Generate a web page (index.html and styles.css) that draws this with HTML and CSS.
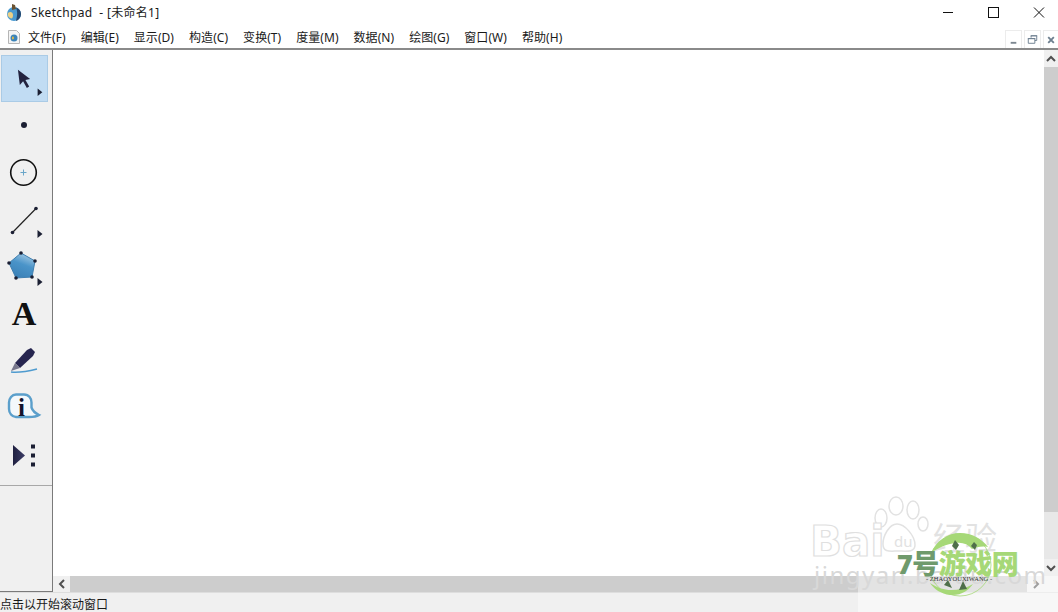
FILE: index.html
```html
<!DOCTYPE html>
<html>
<head>
    <meta charset="UTF-8">
    <title>Sketchpad</title>
    <link rel="stylesheet" href="styles.css">
</head>
<body>
    <div class="window">
        <div class="titlebar">
            <svg class="app-icon" width="16" height="18" viewBox="0 0 16 18">
                <circle cx="8" cy="10" r="7" fill="#4a9ad0"/>
                <path d="M10 3.500c3 1 5 3.500 5 6.500s-2 6-5 7c1-4 2-9 0-13.500z" fill="#23456c"/>
                <path d="M2 9c2-2 5-1 5 2s-1 4-3 3-3-4-2-5z" fill="#ecd186"/>
                <path d="M6 0l3 1 1 4-4 1z" fill="#6a5230"/>
            </svg>
            <span class="title-text">Sketchpad&nbsp;&nbsp;- [未命名1]</span>
            <div class="win-buttons">
                <svg class="win-btn" width="46" height="26" viewBox="0 0 46 26"><path d="M19 12.500h10" stroke="#111" fill="none"/></svg>
                <svg class="win-btn" width="46" height="26" viewBox="0 0 46 26"><rect x="18.500" y="7.500" width="10" height="10" stroke="#111" fill="none"/></svg>
                <svg class="win-btn" width="46" height="26" viewBox="0 0 46 26"><path d="M18 7.500l10 10M28 7.500l-10 10" stroke="#111" fill="none"/></svg>
            </div>
        </div>

        <div class="menubar">
            <svg class="doc-icon" width="14" height="16" viewBox="0 0 14 16">
                <path d="M1.500 1.500h8l3 3v10h-11z" fill="#f4f4f4" stroke="#b5b5b5"/>
                <circle cx="7" cy="9" r="3.500" fill="#3b83b8"/>
                <path d="M5 8c1-1 2 0 2 1s-1 2-2 1z" fill="#d9b54a"/>
            </svg>
            <span class="menu-item">文件(F)</span>
            <span class="menu-item">编辑(E)</span>
            <span class="menu-item">显示(D)</span>
            <span class="menu-item">构造(C)</span>
            <span class="menu-item">变换(T)</span>
            <span class="menu-item">度量(M)</span>
            <span class="menu-item">数据(N)</span>
            <span class="menu-item">绘图(G)</span>
            <span class="menu-item">窗口(W)</span>
            <span class="menu-item">帮助(H)</span>
            <div class="doc-buttons">
                <div class="doc-btn"><svg width="16" height="16" viewBox="0 0 16 16"><path d="M5 11h6" stroke="#7d8790" stroke-width="2"/></svg></div>
                <div class="doc-btn"><svg width="16" height="16" viewBox="0 0 16 16"><path d="M6.500 5.500v-2h6v5h-2M3.500 6.500h7v5h-7z" stroke="#6d7f8f" fill="none"/><path d="M6 3.500h7M3 6.500h8" stroke="#6d7f8f"/></svg></div>
                <div class="doc-btn"><svg width="16" height="16" viewBox="0 0 16 16"><path d="M4.500 5l6 6M10.500 5l-6 6" stroke="#6d7f8f" stroke-width="2"/></svg></div>
            </div>
        </div>

        <div class="workspace">
            <div class="toolbox">
                <div class="tools">
                    <div class="tool active">
                        <svg width="48" height="46" viewBox="0 0 48 46">
                            <path d="M17 13l13 10-5 1 4 7-2.500 1.500-4-7-3.500 4z" fill="#23233f"/>
                            <path class="more" d="M38 33l5 4-5 4z"/>
                        </svg>
                    </div>
                    <div class="tool">
                        <svg width="48" height="46" viewBox="0 0 48 46"><circle cx="24" cy="22" r="3" fill="#1b1f33"/></svg>
                    </div>
                    <div class="tool">
                        <svg width="48" height="46" viewBox="0 0 48 46">
                            <circle cx="23.500" cy="22.500" r="12.800" fill="none" stroke="#111" stroke-width="1.600"/>
                            <path d="M20.500 22.500h6M23.500 19.500v6" stroke="#6aa6c9"/>
                        </svg>
                    </div>
                    <div class="tool">
                        <svg width="48" height="46" viewBox="0 0 48 46">
                            <path d="M12.500 34.500l23.500-24" stroke="#222" stroke-width="1.200"/>
                            <circle cx="12.500" cy="34.500" r="1.800" fill="#1b1f33"/>
                            <circle cx="36" cy="10.500" r="1.800" fill="#1b1f33"/>
                            <path class="more" d="M37.500 32l5 4-5 4z"/>
                        </svg>
                    </div>
                    <div class="tool">
                        <svg width="48" height="46" viewBox="0 0 48 46">
                            <defs>
                                <linearGradient id="poly" x1="0.700" y1="0" x2="0.300" y2="1">
                                    <stop offset="0" stop-color="#a9cde6"/>
                                    <stop offset="0.450" stop-color="#4a94c9"/>
                                    <stop offset="1" stop-color="#3a80b6"/>
                                </linearGradient>
                            </defs>
                            <path d="M21 8l14 8-3 16-16 1-7-15z" fill="url(#poly)" stroke="#3f7fb0"/>
                            <g fill="#1b1f33">
                                <circle cx="21" cy="8" r="1.800"/><circle cx="35" cy="16" r="1.800"/><circle cx="32" cy="32" r="1.800"/><circle cx="16" cy="33" r="1.800"/><circle cx="9" cy="18" r="1.800"/>
                            </g>
                            <path class="more" d="M37.500 33l5 4-5 4z"/>
                        </svg>
                    </div>
                    <div class="tool tool-text">A</div>
                    <div class="tool">
                        <svg width="48" height="46" viewBox="0 0 48 46">
                            <path d="M31 9l4 4-2 4-13 12-5-5 12-13z" fill="#26254f"/>
                            <path d="M15 24l5 5-9 3z" fill="#77778c"/>
                            <path d="M11 33c9 1 18-1 26-3" stroke="#4f9bcf" stroke-width="1.600" fill="none"/>
                        </svg>
                    </div>
                    <div class="tool">
                        <svg width="48" height="46" viewBox="0 0 48 46">
                            <path d="M16 7.500h8c5 0 7.500 4 7.500 8v5c1 3 4.500 6 7.500 7.500-3 2-7 2-10 2H16c-4 0-7-4-7-8v-6.500c0-4 3-8 7-8z" fill="#f4f8fb" stroke="#5b9fcb" stroke-width="2.400"/>
                            <text class="info-i" x="21.500" y="28.500" text-anchor="middle">i</text>
                        </svg>
                    </div>
                    <div class="tool">
                        <svg width="48" height="46" viewBox="0 0 48 46">
                            <defs>
                                <linearGradient id="play" x1="0" y1="0" x2="1" y2="0">
                                    <stop offset="0" stop-color="#1f2040"/>
                                    <stop offset="1" stop-color="#3c3c66"/>
                                </linearGradient>
                            </defs>
                            <path d="M13 11l12 10.500-12 10.500z" fill="url(#play)"/>
                            <path d="M31 10.500h4v4h-4zM31 19.500h4v4h-4zM31 28.500h4v4h-4z" fill="#1b1f33"/>
                        </svg>
                    </div>
                </div>
            </div>

            <div class="canvas-area">
                <div class="canvas-row">
                    <div class="canvas"></div>
                    <div class="vscroll">
                        <div class="arrow"><svg width="14" height="16" viewBox="0 0 14 16"><path d="M3 10l4-4 4 4" stroke="#505050" stroke-width="2" fill="none"/></svg></div>
                        <div class="vtrack"><div class="vthumb"></div></div>
                        <div class="arrow"><svg width="14" height="16" viewBox="0 0 14 16"><path d="M3 6l4 4 4-4" stroke="#505050" stroke-width="2" fill="none"/></svg></div>
                    </div>
                </div>
                <div class="hscroll">
                    <div class="arrow-h"><svg width="16" height="16" viewBox="0 0 16 16"><path d="M10 4l-4 4 4 4" stroke="#505050" stroke-width="2" fill="none"/></svg></div>
                    <div class="hthumb"></div>
                    <div class="arrow-h"><svg width="16" height="16" viewBox="0 0 16 16"><path d="M6 4l4 4-4 4" stroke="#505050" stroke-width="2" fill="none"/></svg></div>
                    <div class="corner"></div>
                </div>
            </div>
        </div>

        <div class="statusbar">点击以开始滚动窗口</div>

        <!-- watermarks over the corner -->
        <div class="mark-fade"></div>
        <div class="mark-baidu">
            <svg class="paw" width="62" height="62" viewBox="0 0 62 62" fill="none" stroke="#e2e2e2" stroke-width="1.500">
                <ellipse cx="10" cy="22" rx="6" ry="9"/>
                <ellipse cx="25" cy="10" rx="7" ry="9"/>
                <ellipse cx="42" cy="14" rx="6" ry="9"/>
                <ellipse cx="52" cy="28" rx="5" ry="7"/>
                <path d="M26 28c8 0 18 12 18 21 0 8-10 6-17 6s-15 2-15-7c0-8 6-20 14-20z"/>
            </svg>
            <span class="baidu-du">du</span>
            <span class="baidu-word">Bai</span>
            <span class="baidu-cn">经验</span>
            <span class="baidu-url">jingyan.baidu.com</span>
        </div>
        <div class="mark-seven">
            <svg class="seven-ring" width="62" height="68" viewBox="0 0 62 68">
                <circle cx="30" cy="34" r="31" fill="none" stroke="#a6d877" stroke-width="0.800"/>
                <path d="M1 22C7 9 18 2 30 2c12 0 22 6 28 14-6-1-12 0-16 2-4-5-10-7-16-6C16 13 8 17 1 22z" fill="#a6d877"/>
                <path d="M0 52c8 5 14 7 21 7 8 0 15-2 22-6-4 6-12 12-23 11C11 63 4 58 0 52z" fill="#a6d877"/>
                <path d="M25 9l4 5-3 5-4-4zM44 11l3 3-2 5-4-4z" fill="#4f6f4a"/>
                <path d="M14 54l4-5 4 8zM29 59l4-9 4 8z" fill="#4f6f4a"/>
            </svg>
            <div class="seven-text"><span class="seven-dark">7号</span><span class="seven-light">游戏网</span></div>
            <div class="seven-sub">- ZHAOYOUXIWANG -</div>
        </div>
    </div>
</body>
</html>
```

FILE: styles.css
```css
* {
    box-sizing: border-box;
}

body {
    margin: 0;
    background-color: #fff;
    font-family: "Noto Sans", "Noto Sans CJK SC", sans-serif;
    font-size: 12px;
    color: #1a1a1a;
}

.window {
    position: relative;
    width: 1058px;
    height: 612px;
    display: flex;
    flex-direction: column;
    overflow: hidden;
}

.titlebar {
    height: 26px;
    display: flex;
    align-items: center;
    padding-left: 6px;
    flex-shrink: 0;
}

.app-icon {
    margin-right: 9px;
}

.title-text {
    font-size: 12px;
    letter-spacing: 0.300px;
    padding-bottom: 2px;
}

.win-buttons {
    margin-left: auto;
    display: flex;
    margin-right: -4px;
}

.menubar {
    height: 22px;
    display: flex;
    align-items: center;
    padding-left: 7px;
    flex-shrink: 0;
    position: relative;
}

.doc-icon {
    margin-right: 7px;
}

.menu-item {
    margin-right: 15px;
    font-size: 12px;
    white-space: nowrap;
    letter-spacing: 0.050px;
}

.doc-buttons {
    margin-left: auto;
    display: flex;
    gap: 2px;
    align-self: flex-end;
    margin-right: -2px;
}

.doc-btn {
    width: 17px;
    height: 18px;
    border: 1px solid #ececec;
    border-bottom: none;
    display: flex;
    align-items: center;
    justify-content: center;
}

.workspace {
    flex: 1;
    display: flex;
    min-height: 0;
    border-top: 2px solid #8a8a8a;
}

.toolbox {
    width: 53px;
    flex-shrink: 0;
    background-color: #f0f0f0;
    border-right: 1px solid #7a7a7a;
    border-bottom: 1px solid #7a7a7a;
}

.tools {
    border-bottom: 1px solid #a8a8a8;
    padding-top: 5px;
    height: 436px;
}

.tool {
    width: 48px;
    height: 47.300px;
    display: flex;
    align-items: center;
    justify-content: center;
}

.tool.active {
    background-color: #c1dcf3;
    border: 1px solid #aacbe6;
    margin-left: 1px;
    width: 47px;
}

.tool-text {
    font-family: "Liberation Serif", serif;
    font-weight: bold;
    font-size: 34px;
    line-height: 34px;
    padding-bottom: 3px;
    color: #111;
}

.info-i {
    font-family: "Liberation Serif", serif;
    font-weight: bold;
    font-size: 25px;
    fill: #14142c;
}

.more {
    fill: #1b1f33;
}

.canvas-area {
    flex: 1;
    display: flex;
    flex-direction: column;
    min-width: 0;
}

.canvas-row {
    flex: 1;
    display: flex;
    min-height: 0;
}

.canvas {
    flex: 1;
    background-color: #fff;
}

.vscroll {
    width: 14px;
    display: flex;
    flex-direction: column;
    background-color: #f0f0f0;
}

.arrow {
    height: 17px;
    display: flex;
    align-items: center;
    justify-content: center;
}

.vtrack {
    flex: 1;
    background-color: #e8e8e8;
}

.vthumb {
    height: 445px;
    background-color: #cdcdcd;
}

.hscroll {
    height: 16px;
    display: flex;
    align-items: center;
    background-color: #f0f0f0;
}

.arrow-h {
    width: 17px;
    height: 16px;
    display: flex;
    align-items: center;
    justify-content: center;
}

.hthumb {
    flex: 1;
    height: 16px;
    background-color: #cdcdcd;
}

.corner {
    width: 14px;
    height: 16px;
}

.statusbar {
    height: 20px;
    flex-shrink: 0;
    background-color: #f0f0f0;
    border-top: 1px solid #dedede;
    font-size: 12px;
    line-height: 21px;
    padding-top: 1px;
    white-space: nowrap;
}

/* watermarks */
.mark-fade {
    position: absolute;
    left: 858px;
    top: 576px;
    width: 200px;
    height: 36px;
    background-color: rgba(255, 255, 255, 0.45);
}

.mark-baidu {
    position: absolute;
    left: 812px;
    top: 496px;
    width: 200px;
    height: 100px;
    color: #e2e2e2;
}

.paw {
    position: absolute;
    left: 59px;
    top: 0;
}

.baidu-du {
    position: absolute;
    left: 82px;
    top: 36px;
    font-size: 15px;
    line-height: 18px;
}

.baidu-word {
    position: absolute;
    left: -2px;
    top: 25px;
    font-size: 42px;
    line-height: 42px;
    font-weight: bold;
    font-family: "DejaVu Sans", sans-serif;
    color: #fff;
    -webkit-text-stroke: 1.200px #e0e0e0;
}

.baidu-cn {
    position: absolute;
    left: 121px;
    top: 24px;
    font-size: 32px;
    line-height: 36px;
}

.baidu-url {
    position: absolute;
    left: 2px;
    top: 64px;
    font-size: 24px;
    line-height: 30px;
    letter-spacing: 1.500px;
    white-space: nowrap;
    color: #d8d8d8;
}

.mark-seven {
    position: absolute;
    left: 897px;
    top: 530px;
    width: 124px;
    height: 72px;
}

.seven-ring {
    position: absolute;
    left: 33px;
    top: 1px;
}

.seven-text {
    position: absolute;
    left: 0;
    top: 17px;
    font-size: 27px;
    line-height: 34px;
    font-weight: 900;
    letter-spacing: -0.500px;
    white-space: nowrap;
}

.seven-dark {
    color: #6f9a6c;
}

.seven-light {
    color: #a6d877;
}

.seven-sub {
    position: absolute;
    left: 29px;
    top: 45px;
    font-family: "Liberation Serif", serif;
    font-size: 6.500px;
    white-space: nowrap;
    color: #333;
}
```
